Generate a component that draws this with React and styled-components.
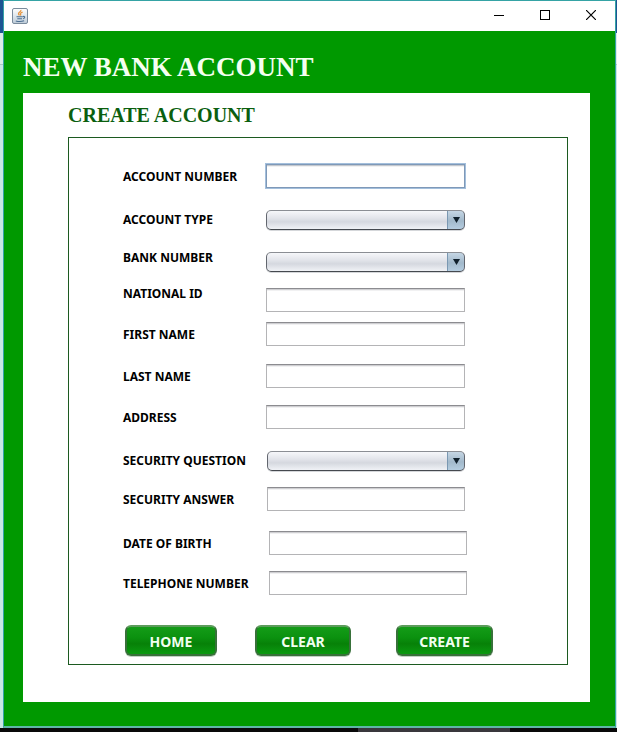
import React from "react";
import styled, { createGlobalStyle } from "styled-components";

const GlobalStyle = createGlobalStyle`
  *, *::before, *::after { box-sizing: border-box; }
  body {
    margin: 0;
    background: #c9e6e4;
    font-family: "Noto Sans", Tahoma, Verdana, sans-serif;
  }
`;

const Desktop = styled.div`
  display: flex;
  flex-direction: column;
  min-height: 100vh;
  background: linear-gradient(#1d5493 0 33px, #dcebea 33px 64px, #a9c6c4 64px 65px, #c9e6e4 65px);
`;

const Window = styled.main`
  display: flex;
  flex: 1;
  flex-direction: column;
  margin: 0 1px 0 3px;
  border: 1px solid #35a3a5;
  border-bottom-width: 2px;
  border-bottom-color: #5fb5a8;
  background: #009900;
`;

const TitleBar = styled.header`
  display: flex;
  align-items: center;
  justify-content: space-between;
  height: 30px;
  padding-left: 8px;
  background: #fff;
`;

const WindowControls = styled.div`
  display: flex;
  height: 100%;
`;

const WindowButton = styled.button`
  display: grid;
  place-items: center;
  width: 46px;
  padding: 0 2px 2px 0;
  border: 0;
  background: none;
  color: #000;
`;

const PageTitle = styled.h1`
  margin: 0;
  padding: 21px 19px 11px;
  color: #f4fff0;
  font: bold 27px/30px "Liberation Serif", "Century Schoolbook", serif;
`;

const Content = styled.section`
  flex: 1;
  margin: 0 25px 24px 19px;
  padding: 10px 22px 37px 45px;
  background: #fff;
`;

const SectionTitle = styled.h2`
  margin: 0 0 10px;
  color: #0b5f0f;
  font: bold 20px/24px "Liberation Serif", "Century Schoolbook", serif;
`;

const Panel = styled.form`
  padding: 26px 0 8px 54px;
  border: 1px solid #1c5a20;
`;

const Field = styled.div`
  display: grid;
  grid-template-columns: ${(p) => p.$labelWidth}px 1fr;
  align-items: ${(p) => (p.$labelTop ? "start" : "center")};
  margin: ${(p) => p.$gap}px ${(p) => p.$inset}px 0 0;
`;

const Label = styled.label`
  padding-top: ${(p) => (p.$lowered ? 2 : 0)}px;
  color: #000;
  font-size: 12px;
  font-weight: 700;
  line-height: 12px;
  white-space: nowrap;
`;

const TextBox = styled.input`
  width: 100%;
  height: 24px;
  padding: 2px 6px;
  border: 1px solid #b4b4b6;
  border-top-color: #8c8c90;
  border-radius: 0;
  outline: none;
  background: #fff;
  box-shadow: inset 0 1px 0 #cfcfd2, inset 0 2px 0 #f1f1f2;
  font: 12px "Noto Sans", sans-serif;

  &:focus {
    border-color: #7f99b8;
    box-shadow: 0 0 0 1px #a3bfdc, inset 0 1px 0 #c3c8ce, inset 0 2px 0 #f1f1f2;
    caret-color: transparent;
  }
`;

const ComboFrame = styled.div`
  position: relative;
  height: 20px;
`;

const Combo = styled.select`
  display: block;
  width: 100%;
  height: 20px;
  padding: 0 22px 0 6px;
  appearance: none;
  border: 1px solid #62666e;
  border-top-color: #8b8e94;
  border-bottom-color: #45494f;
  border-radius: 5px;
  outline: none;
  background:
    linear-gradient(#c5d6e4, #a2b9cb 55%, #b5cde0) right / 16px 100% no-repeat,
    linear-gradient(#7a98b2, #7a98b2) right 16px top / 1px 100% no-repeat,
    linear-gradient(#f6f7fa, #e2e4ea 40%, #d5d8df 60%, #f0f2f6);
  box-shadow: 0 1px 0 #d5d7da;
  font: 12px "Noto Sans", sans-serif;
`;

const ComboArrow = styled.svg`
  position: absolute;
  top: 7px;
  right: 5px;
  pointer-events: none;
`;

const Actions = styled.div`
  display: flex;
  margin: 30px 0 0 2px;
`;

const ActionButton = styled.button`
  flex: none;
  width: ${(p) => p.$width}px;
  height: 31px;
  margin-right: ${(p) => p.$gap}px;
  padding: 2px 0 0;
  border: 2px solid #38713a;
  border-top-color: #5d9c5c;
  border-radius: 6px;
  background: linear-gradient(#149c18, #0b910f 40%, #078108 62%, #0b9a10);
  box-shadow: 0 1px 0 #c3cfc4;
  color: #f1fff0;
  font: bold 14px/24px "Noto Sans", Tahoma, sans-serif;
`;

const Taskbar = styled.footer`
  display: flex;
  height: 4px;
  padding-left: 58%;
  background: #090909;
`;

const TaskbarItem = styled.div`
  width: 152px;
  background: #39373c;
`;

function JavaIcon() {
  return (
    <svg width="16" height="16" viewBox="0 0 16 16" fill="none" aria-hidden="true">
      <defs>
        <linearGradient id="tile" x2="0" y2="1">
          <stop stopColor="#ffffff" />
          <stop offset="1" stopColor="#bccbd8" />
        </linearGradient>
      </defs>
      <rect x=".5" y=".5" width="15" height="15" rx="1.5" fill="url(#tile)" stroke="#7a8b9c" />
      <path d="M8.800 2c1 1.500-2.700 2.300-2.300 3.800.1.700.7 1 .9 1.600M10.600 4.200C9.200 4.700 8.200 5.300 8.500 6c.3.6.4.9-.1 1.500" stroke="#e6943d" strokeWidth="1.300" />
      <path d="M4.500 8.800h6.300M5.300 10.700h4.800M3.800 13c2.400.6 6 .6 8.300-.2M11 8.600c2.200-.8 2.400 1.300.2 2.100" stroke="#4d6f91" strokeWidth="1.100" />
    </svg>
  );
}

const fields = [
  { id: "accountNumber", label: "ACCOUNT NUMBER", gap: 0, autoFocus: true },
  { id: "accountType", label: "ACCOUNT TYPE", gap: 22, combo: true },
  { id: "bankNumber", label: "BANK NUMBER", gap: 22, combo: true, labelTop: true },
  { id: "nationalId", label: "NATIONAL ID", gap: 16, labelTop: true },
  { id: "firstName", label: "FIRST NAME", gap: 10 },
  { id: "lastName", label: "LAST NAME", gap: 18 },
  { id: "address", label: "ADDRESS", gap: 17 },
  { id: "securityQuestion", label: "SECURITY QUESTION", gap: 22, combo: true, labelWidth: 144 },
  { id: "securityAnswer", label: "SECURITY ANSWER", gap: 16, labelWidth: 144 },
  { id: "dateOfBirth", label: "DATE OF BIRTH", gap: 20, labelWidth: 146, inset: 100 },
  { id: "telephone", label: "TELEPHONE NUMBER", gap: 16, labelWidth: 146, inset: 100 },
];

function FormField({ id, label, gap, combo, autoFocus, labelTop, labelWidth = 143, inset = 102 }) {
  return (
    <Field $gap={gap} $labelTop={labelTop} $labelWidth={labelWidth} $inset={inset}>
      <Label htmlFor={id} $lowered={!combo && !labelTop}>{label}</Label>
      {combo ? (
        <ComboFrame>
          <Combo id={id} defaultValue="">
            <option value="" />
          </Combo>
          <ComboArrow width="7" height="6" viewBox="0 0 7 6" aria-hidden="true">
            <path d="M0 0h7L3.500 6z" fill="#10202c" />
          </ComboArrow>
        </ComboFrame>
      ) : (
        <TextBox id={id} type="text" autoComplete="off" autoFocus={autoFocus} />
      )}
    </Field>
  );
}

export default function App() {
  return (
    <>
      <GlobalStyle />
      <Desktop>
        <Window>
          <TitleBar>
            <JavaIcon />
            <WindowControls>
              <WindowButton type="button" aria-label="Minimize">
                <svg width="10" height="10" shapeRendering="crispEdges"><path d="M0 5.500h10" stroke="currentColor" /></svg>
              </WindowButton>
              <WindowButton type="button" aria-label="Maximize">
                <svg width="10" height="10" shapeRendering="crispEdges"><path d="M.5.5h9v9h-9z" fill="none" stroke="currentColor" /></svg>
              </WindowButton>
              <WindowButton type="button" aria-label="Close">
                <svg width="10" height="10"><path d="M0 0l10 10M10 0L0 10" stroke="currentColor" strokeWidth="1.200" /></svg>
              </WindowButton>
            </WindowControls>
          </TitleBar>
          <PageTitle>NEW BANK ACCOUNT</PageTitle>
          <Content>
            <SectionTitle>CREATE ACCOUNT</SectionTitle>
            <Panel onSubmit={(e) => e.preventDefault()}>
              {fields.map((field) => (
                <FormField key={field.id} {...field} />
              ))}
              <Actions>
                <ActionButton type="button" $width={92} $gap={38}>HOME</ActionButton>
                <ActionButton type="reset" $width={96} $gap={45}>CLEAR</ActionButton>
                <ActionButton type="submit" $width={97} $gap={0}>CREATE</ActionButton>
              </Actions>
            </Panel>
          </Content>
        </Window>
        <Taskbar>
          <TaskbarItem />
        </Taskbar>
      </Desktop>
    </>
  );
}
